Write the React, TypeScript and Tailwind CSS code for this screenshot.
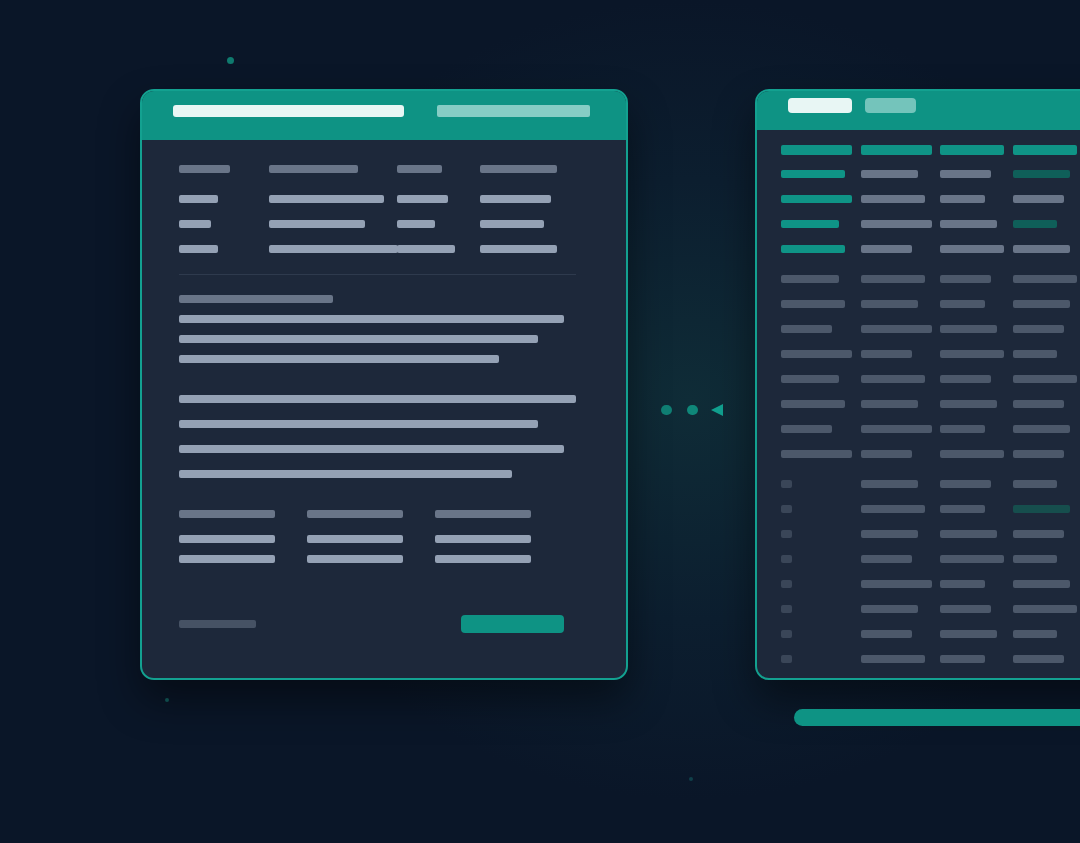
import React from "react";

type Cell = { w: number; c: string };

const TEAL = "bg-[#0f9486]";
const TEAL_DIM = "bg-[#0f5f59]";
const GREY = "bg-[#697588]";
const GREY_DIM = "bg-[#4c586a]";
const LIGHT = "bg-[#94a1b4]";

function Bar({ w, className = "" }: { w: number; className?: string }) {
  return <div className={`h-[8px] rounded-[2px] ${className}`} style={{ width: w }} />;
}

const leftHead = [51, 89, 45, 77];
const leftRows = [
  [39, 115, 51, 71],
  [32, 96, 38, 64],
  [39, 129, 58, 77],
];
const para1 = [385, 359, 320];
const para2 = [397, 359, 385, 333];

const tealRows: Cell[][] = [
  [{ w: 64, c: TEAL }, { w: 57, c: GREY }, { w: 51, c: GREY }, { w: 57, c: TEAL_DIM }],
  [{ w: 71, c: TEAL }, { w: 64, c: GREY }, { w: 45, c: GREY }, { w: 51, c: GREY }],
  [{ w: 58, c: TEAL }, { w: 71, c: GREY }, { w: 57, c: GREY }, { w: 44, c: TEAL_DIM }],
  [{ w: 64, c: TEAL }, { w: 51, c: GREY }, { w: 64, c: GREY }, { w: 57, c: GREY }],
];

const greyRows = [
  [58, 64, 51, 64],
  [64, 57, 45, 57],
  [51, 71, 57, 51],
  [71, 51, 64, 44],
  [58, 64, 51, 64],
  [64, 57, 57, 51],
  [51, 71, 45, 57],
  [71, 51, 64, 51],
];

// negative width = dark teal highlight
const checkRows = [
  [57, 51, 44],
  [64, 45, -57],
  [57, 57, 51],
  [51, 64, 44],
  [71, 45, 57],
  [57, 51, 64],
  [51, 57, 44],
  [64, 45, 51],
];

function LeftCard() {
  return (
    <div className="w-[488px] h-[591px] shrink-0 rounded-[14px] border-2 border-[#13a190] bg-[#1d283a] overflow-hidden flex flex-col shadow-[0_20px_40px_rgba(0,0,0,0.45)]">
      <div className="h-[49px] shrink-0 bg-[#0e9384] flex items-start gap-[33px] pt-[14px] pl-[31px]">
        <div className="h-[12px] w-[231px] rounded-[3px] bg-[#e8f6f4]" />
        <div className="h-[12px] w-[153px] rounded-[2px] bg-[#86cdc5]" />
      </div>
      <div className="flex flex-col pl-[37px] pt-[25px]">
        <div className="grid grid-cols-[90px_128px_83px_1fr]">
          {leftHead.map((w, i) => (
            <Bar key={i} w={w} className={GREY} />
          ))}
        </div>
        <div className="flex flex-col gap-[17px] mt-[22px]">
          {leftRows.map((r, i) => (
            <div key={i} className="grid grid-cols-[90px_128px_83px_1fr]">
              {r.map((w, j) => (
                <Bar key={j} w={w} className={LIGHT} />
              ))}
            </div>
          ))}
        </div>
        <div className="mt-[21px] h-px w-[397px] bg-[#2e3a4d]" />
        <Bar w={154} className={`mt-[20px] ${GREY}`} />
        <div className="flex flex-col gap-[12px] mt-[12px]">
          {para1.map((w, i) => (
            <Bar key={i} w={w} className={LIGHT} />
          ))}
        </div>
        <div className="flex flex-col gap-[17px] mt-[32px]">
          {para2.map((w, i) => (
            <Bar key={i} w={w} className={LIGHT} />
          ))}
        </div>
        <div className="mt-[32px] flex gap-[32px]">
          {[0, 1, 2].map((i) => (
            <div key={i} className="flex flex-col">
              <Bar w={96} className={GREY} />
              <Bar w={96} className={`mt-[17px] ${LIGHT}`} />
              <Bar w={96} className={`mt-[12px] ${LIGHT}`} />
            </div>
          ))}
        </div>
        <div className="mt-[52px] w-[385px] flex items-center justify-between">
          <Bar w={77} className="bg-[#465264]" />
          <div className="h-[18px] w-[103px] rounded-[4px] bg-[#0e9384]" />
        </div>
      </div>
    </div>
  );
}

function RightCard() {
  const cols = "grid grid-cols-[80px_79px_73px_80px]";
  return (
    <div className="w-[420px] h-[591px] shrink-0 rounded-[14px] border-2 border-[#13a190] bg-[#1d283a] overflow-hidden flex flex-col shadow-[0_20px_40px_rgba(0,0,0,0.45)]">
      <div className="h-[39px] shrink-0 bg-[#0e9384] flex items-start gap-[13px] pt-[7px] pl-[31px]">
        <div className="h-[15px] w-[64px] rounded-[4px] bg-[#e8f6f4]" />
        <div className="h-[15px] w-[51px] rounded-[4px] bg-[#74c4bb]" />
      </div>
      <div className="flex flex-col pl-[24px] pt-[15px]">
        <div className={cols}>
          {[71, 71, 64, 64].map((w, i) => (
            <div key={i} className={`h-[10px] rounded-[2px] ${TEAL}`} style={{ width: w }} />
          ))}
        </div>
        <div className="flex flex-col gap-[17px] mt-[15px]">
          {tealRows.map((r, i) => (
            <div key={i} className={cols}>
              {r.map((c, j) => (
                <Bar key={j} w={c.w} className={c.c} />
              ))}
            </div>
          ))}
        </div>
        <div className="flex flex-col gap-[17px] mt-[22px]">
          {greyRows.map((r, i) => (
            <div key={i} className={cols}>
              {r.map((w, j) => (
                <Bar key={j} w={w} className={GREY_DIM} />
              ))}
            </div>
          ))}
        </div>
        <div className="flex flex-col gap-[17px] mt-[22px]">
          {checkRows.map((r, i) => (
            <div key={i} className={cols}>
              <div className="h-[8px] w-[11px] rounded-[2px] bg-[#3a4658]" />
              {r.map((w, j) => (
                <Bar key={j} w={Math.abs(w)} className={w < 0 ? "bg-[#164e4d]" : GREY_DIM} />
              ))}
            </div>
          ))}
        </div>
      </div>
    </div>
  );
}

export default function App() {
  return (
    <div className="relative w-[1080px] h-[843px] overflow-hidden bg-[#0a1628] bg-[radial-gradient(ellipse_440px_400px_at_690px_400px,#0f2c37_0%,#0c1e2f_55%,#0a1628_100%)] font-['Liberation_Sans',sans-serif]">
      <div className="absolute left-[227px] top-[57px] h-[7px] w-[7px] rounded-full bg-[#0f7a6e]" />
      <div className="absolute left-[165px] top-[698px] h-[4px] w-[4px] rounded-full bg-[#0f4a4a]" />
      <div className="absolute left-[689px] top-[777px] h-[4px] w-[4px] rounded-full bg-[#10404a]" />

      <div className="flex items-start pt-[89px] pl-[140px]">
        <LeftCard />
        <div className="w-[127px] shrink-0 flex items-center justify-center gap-[15px] mt-[315px]">
          <div className="h-[10px] w-[11px] rounded-full bg-[#0f7e73]" />
          <div className="h-[10px] w-[11px] rounded-full bg-[#0f8779]" />
          <svg width="12" height="12" viewBox="0 0 12 12" className="-ml-[2px]">
            <polygon points="0,6 12,0 12,12" fill="#11a08f" />
          </svg>
        </div>
        <div className="flex flex-col shrink-0">
          <RightCard />
          <div className="mt-[29px] ml-[39px] h-[17px] w-[400px] rounded-full bg-[#0e9384]" />
        </div>
      </div>
    </div>
  );
}
